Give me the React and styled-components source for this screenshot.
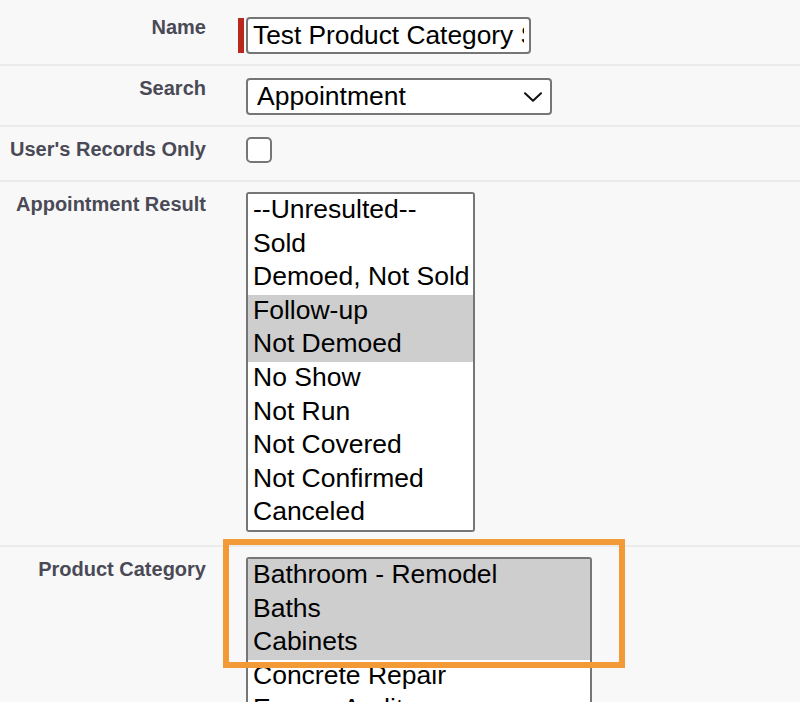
import React from "react";
import styled, { createGlobalStyle } from "styled-components";

const Global = createGlobalStyle`
  html, body {
    margin: 0;
    padding: 0;
    overflow: hidden;
    background: #f8f8f8;
  }
  body {
    font-family: "Liberation Sans", Arial, Helvetica, sans-serif;
  }
`;

const Page = styled.div`
  width: 800px;
  height: 702px;
  overflow: hidden;
  background: #f8f8f8;
`;

const Row = styled.div`
  display: grid;
  grid-template-columns: 206px 1fr;
  column-gap: 40px;
  align-items: start;
  padding: ${(p) => p.$top ?? 10}px 0 10px;
  border-bottom: ${(p) => (p.$last ? "none" : "2px solid #ebebeb")};
`;

const Label = styled.div`
  font-family: "Liberation Sans", Arial, sans-serif;
  font-weight: 700;
  font-size: 20px;
  line-height: 20px;
  color: #4a4a56;
  text-align: right;
  padding: 2px 0 11px;
  white-space: nowrap;
`;

const Control = styled.div`
  position: relative;
  display: flex;
  align-items: flex-start;
`;

const RequiredWrap = styled.div`
  display: flex;
  align-items: center;
  gap: 2px;
  margin-left: -8px;
  margin-top: 2px;
`;

const RequiredBar = styled.div`
  width: 6px;
  height: 35px;
  background: #b8281c;
`;

const TextInput = styled.input`
  box-sizing: border-box;
  width: 285px;
  height: 37px;
  margin: 0;
  padding: 0 5px;
  border: 2px solid #767676;
  border-radius: 4px;
  background: #fff;
  font-family: "Liberation Sans", Arial, sans-serif;
  font-size: 26.3px;
  color: #000;
  outline: none;
`;

const SelectBox = styled.div`
  box-sizing: border-box;
  width: 306px;
  height: 37px;
  margin-top: 2px;
  padding: 0 8px 0 9px;
  border: 2px solid #767676;
  border-radius: 4px;
  background: #fff;
  display: flex;
  align-items: center;
  justify-content: space-between;
  font-family: "Liberation Sans", Arial, sans-serif;
  font-size: 26.5px;
  color: #000;
`;

const Checkbox = styled.div`
  box-sizing: border-box;
  width: 26px;
  height: 26px;
  border: 2px solid #767676;
  border-radius: 5px;
  background: #fff;
`;

const ListBox = styled.div`
  box-sizing: border-box;
  width: ${(p) => p.$width}px;
  margin-bottom: 3px;
  border: 2px solid #767676;
  border-radius: 3px;
  background: #fff;
  overflow: hidden;
`;

const Option = styled.div`
  height: 33.6px;
  box-sizing: border-box;
  padding: 1px 5px 0;
  line-height: 28px;
  font-family: "Liberation Sans", Arial, sans-serif;
  font-size: 26.5px;
  color: #000;
  white-space: nowrap;
  background: ${(p) => (p.$selected ? "#cecece" : "#fff")};
`;

const Callout = styled.div`
  position: absolute;
  left: -23px;
  top: -18px;
  width: 402px;
  height: 129px;
  box-sizing: border-box;
  border: 6px solid #f29a38;
  pointer-events: none;
`;

const Chevron = () => (
  <svg width="18" height="10" viewBox="0 0 18 10" aria-hidden="true">
    <path d="M1 1.2 L9 8.8 L17 1.2" fill="none" stroke="#111" strokeWidth="2" strokeLinecap="round" strokeLinejoin="round" />
  </svg>
);

const results = [
  ["--Unresulted--", false],
  ["Sold", false],
  ["Demoed, Not Sold", false],
  ["Follow-up", true],
  ["Not Demoed", true],
  ["No Show", false],
  ["Not Run", false],
  ["Not Covered", false],
  ["Not Confirmed", false],
  ["Canceled", false],
];

const categories = [
  ["Bathroom - Remodel", true],
  ["Baths", true],
  ["Cabinets", true],
  ["Concrete Repair", false],
  ["Energy Audit", false],
  ["Flooring", false],
];

export default function App() {
  return (
    <Page>
      <Global />
      <Row $top={15}>
        <Label>Name</Label>
        <Control>
          <RequiredWrap>
            <RequiredBar />
            <TextInput defaultValue="Test Product Category Search" readOnly />
          </RequiredWrap>
        </Control>
      </Row>
      <Row>
        <Label>Search</Label>
        <Control>
          <SelectBox>
            <span>Appointment</span>
            <Chevron />
          </SelectBox>
        </Control>
      </Row>
      <Row>
        <Label>User's Records Only</Label>
        <Control>
          <Checkbox role="checkbox" aria-checked="false" />
        </Control>
      </Row>
      <Row>
        <Label>Appointment Result</Label>
        <Control>
          <ListBox $width={229} role="listbox">
            {results.map(([t, s]) => (
              <Option key={t} $selected={s}>{t}</Option>
            ))}
          </ListBox>
        </Control>
      </Row>
      <Row $last>
        <Label>Product Category</Label>
        <Control>
          <ListBox $width={346} role="listbox">
            {categories.map(([t, s]) => (
              <Option key={t} $selected={s}>{t}</Option>
            ))}
          </ListBox>
          <Callout />
        </Control>
      </Row>
    </Page>
  );
}
